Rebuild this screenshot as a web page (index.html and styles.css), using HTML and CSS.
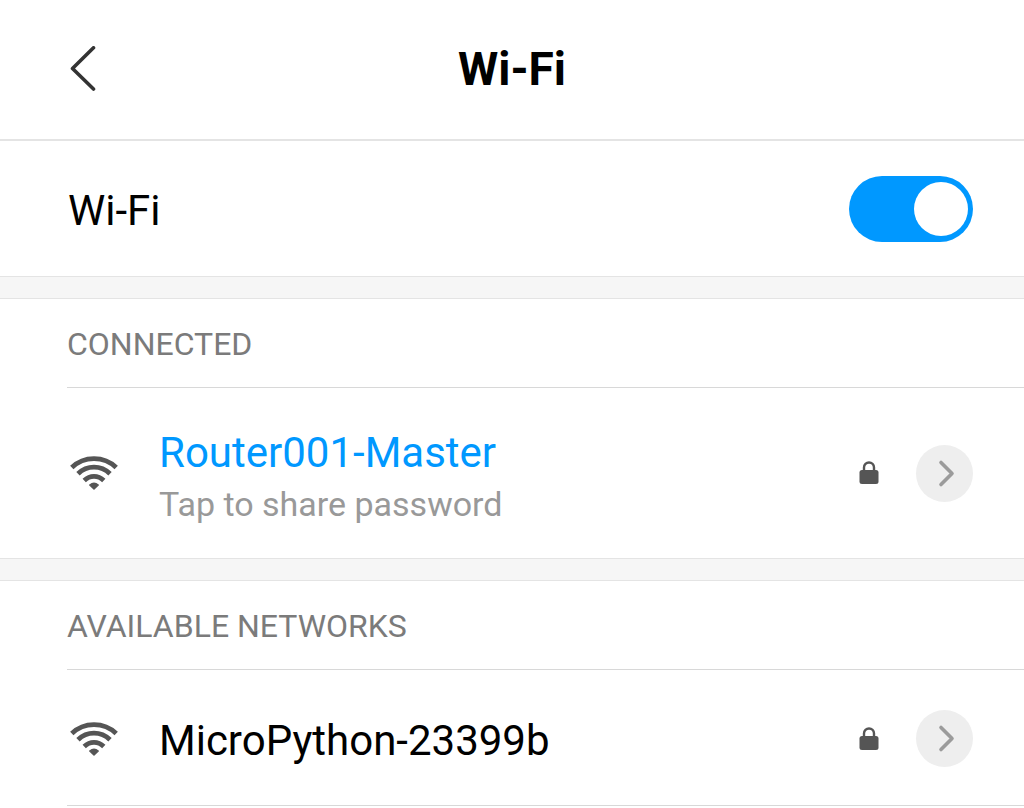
FILE: index.html
```
<!DOCTYPE html>
<html lang="en">
<head>
<meta charset="utf-8">
<title>Wi-Fi</title>
<link rel="stylesheet" href="styles.css">
</head>
<body>
<svg class="defs" aria-hidden="true">
  <symbol id="wifi" viewBox="0 0 48 36">
    <g fill="none" stroke="#555" stroke-width="4.800">
      <path d="M1.800 12.500C14 0.600 34 0.600 46.200 12.500"/>
      <path d="M8 18.800C17 10 31 10 40 18.800"/>
      <path d="M14.200 25.500C20 20 28 20 33.800 25.500"/>
    </g>
    <path fill="#555" stroke="#555" stroke-width="1.500" stroke-linejoin="round" d="M19.800 30Q24 26.500 28.200 30L24 34Z"/>
  </symbol>
  <symbol id="lock" viewBox="0 0 20 24">
    <rect x="0.500" y="9" width="19" height="14" rx="2.500" fill="#555"/>
    <path d="M5 10V6.500a5 5 0 0 1 10 0V10" fill="none" stroke="#555" stroke-width="2.400"/>
  </symbol>
  <symbol id="chevron" viewBox="0 0 57 57">
    <path d="M25 17.500L36 28.500L25 39.500" fill="none" stroke="#9b9b9b" stroke-width="3.600" stroke-linecap="round" stroke-linejoin="round"/>
  </symbol>
</svg>
<header class="header">
  <button class="back" aria-label="Back"><svg viewBox="0 0 28 46"><path d="M25.500 1.800L4.500 22.500L25.500 43" fill="none" stroke="#333" stroke-width="3.600" stroke-linecap="round" stroke-linejoin="round"/></svg></button>
  <h1 class="title">Wi-Fi</h1>
</header>
<main>
  <section class="group">
    <div class="toggle-row">
      <label for="wifi-toggle">Wi-Fi</label>
      <input class="switch" id="wifi-toggle" type="checkbox" role="switch" checked>
    </div>
  </section>
  <section class="group">
    <h2 class="heading">CONNECTED</h2>
    <div class="network connected">
      <svg class="wifi" aria-hidden="true"><use href="#wifi"/></svg>
      <div class="info"><div class="name">Router001-Master</div><div class="hint">Tap to share password</div></div>
      <svg class="lock" aria-hidden="true"><use href="#lock"/></svg>
      <button class="details" aria-label="Router001-Master details"><svg><use href="#chevron"/></svg></button>
    </div>
  </section>
  <section class="group">
    <h2 class="heading">AVAILABLE NETWORKS</h2>
    <div class="network available">
      <svg class="wifi" aria-hidden="true"><use href="#wifi"/></svg>
      <div class="info"><div class="name">MicroPython-23399b</div></div>
      <svg class="lock" aria-hidden="true"><use href="#lock"/></svg>
      <button class="details" aria-label="MicroPython-23399b details"><svg><use href="#chevron"/></svg></button>
    </div>
  </section>
</main>
</body>
</html>
```
FILE: styles.css
```
*, *::before { box-sizing: border-box; }
body { margin: 0; background: #fff; color: #000; font-family: Roboto, sans-serif; }
.defs { display: none; }
button { border: 0; padding: 0; background: none; }
button svg { display: block; width: 100%; height: 100%; }
.header { display: grid; grid-template-columns: 1fr auto 1fr; align-items: center; padding: 42px 68px 43px; border-bottom: 2px solid #e4e4e4; }
.back { width: 28px; height: 46px; }
.title { margin: 0; font-size: 46px; line-height: 54px; font-weight: 700; }
.group + .group::before { content: ""; display: block; height: 23px; background: #f6f6f6; border: solid #e4e4e4; border-width: 1px 0; }
.toggle-row { display: flex; align-items: center; justify-content: space-between; padding: 35px 51px 34px 68px; font-size: 42px; line-height: 50px; }
.toggle-row label { padding-top: 4px; }
.switch { appearance: none; display: block; margin: 0; width: 124px; height: 66px; padding: 6px 5px; border-radius: 33px; background: #0098ff; }
.switch::before { content: ""; display: block; width: 54px; height: 54px; border-radius: 50%; background: #fff; }
.switch:checked::before { margin-left: auto; }
.heading { margin: 0 0 0 67px; padding: 25px 0 23px; font-size: 32px; line-height: 40px; font-weight: 400; color: #7b7b7b; border-bottom: 1px solid #d8d8d8; }
.network { display: flex; align-items: center; padding-right: 51px; padding-left: 70px; }
.connected { padding-top: 28px; padding-bottom: 28px; }
.available { margin-left: 67px; padding: 40px 51px 38px 3px; border-bottom: 1px solid #d8d8d8; }
.wifi { width: 48px; height: 36px; flex: none; }
.info { flex: 1; padding-left: 41px; }
.connected .info { padding-top: 12px; }
.name { font-size: 42px; line-height: 50px; }
.available .name { padding-top: 4px; }
.connected .name { color: #0098ff; }
.hint { font-size: 34px; line-height: 52px; color: #999; }
.lock { width: 20px; height: 24px; margin-right: 37px; flex: none; }
.details { width: 57px; height: 57px; border-radius: 50%; background: #eee; flex: none; }
```
